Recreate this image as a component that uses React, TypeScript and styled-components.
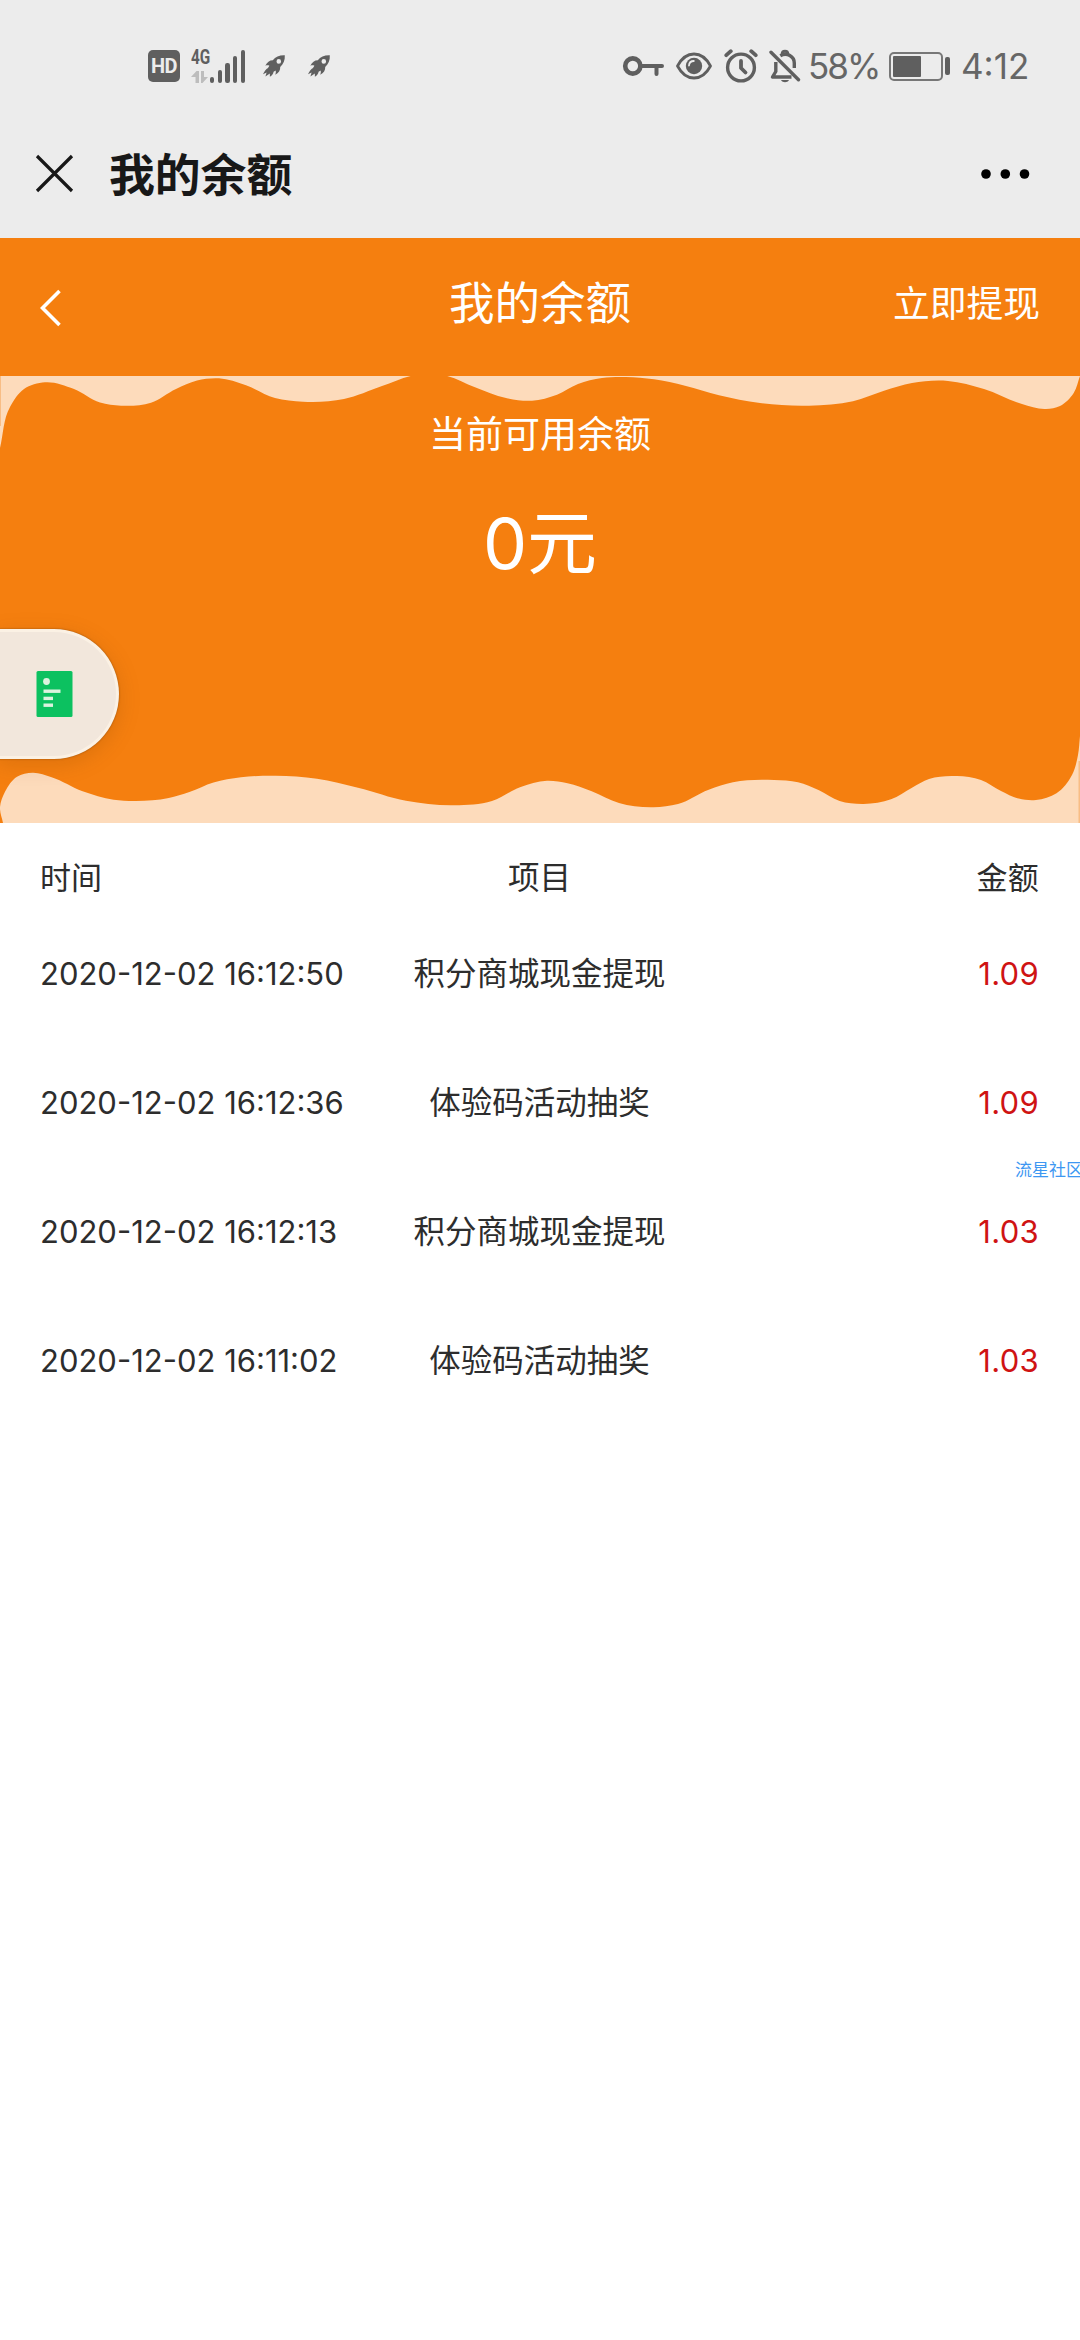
import React from "react";
import styled, { createGlobalStyle } from "styled-components";

const GlobalStyle = createGlobalStyle`
  html, body {
    margin: 0;
    padding: 0;
    background: #ffffff;
  }
  * {
    box-sizing: border-box;
  }
`;

const ORANGE = "#f57f0f";
const PEACH = "#fddbbb";
const STATUS_INK = "#5f5f5f";

const Screen = styled.div`
  position: relative;
  width: 1080px;
  height: 2340px;
  overflow: hidden;
  background: #ffffff;
  font-family: Inter, "Noto Sans CJK SC", sans-serif;
  color: #2d2d2d;
`;

/* ---------- status bar ---------- */

const StatusBar = styled.header`
  display: flex;
  justify-content: space-between;
  height: 109px;
  padding: 45px 52px 0 148px;
  background: #ececec;
  color: ${STATUS_INK};
`;

const StatusGroup = styled.div<{ $gap?: number; $end?: number }>`
  display: flex;
  align-items: center;
  height: 42px;
  gap: ${(p) => p.$gap ?? 0}px;
  margin-right: ${(p) => p.$end ?? 0}px;
`;

const HdBadge = styled.span`
  display: flex;
  align-items: center;
  justify-content: center;
  width: 32px;
  height: 32px;
  border-radius: 5px;
  background: ${STATUS_INK};
  color: #ececec;
  font: 700 20px/32px Roboto, sans-serif;
  letter-spacing: -0.6px;
`;

const Network = styled.div`
  display: flex;
  align-items: flex-end;
  width: 55px;
  height: 34px;
  margin: 0 16px 0 11px;
`;

const NetworkType = styled.div`
  display: flex;
  flex-direction: column;
  justify-content: space-between;
  width: 19px;
  height: 34px;
`;

const NetworkLabel = styled.span`
  font: 700 21px/16px Roboto, sans-serif;
  transform: scaleX(0.73);
  transform-origin: left;
`;

const SignalBars = styled.div`
  display: flex;
  align-items: flex-end;
  gap: 3.3px;
`;

const SignalBar = styled.i<{ $height: number }>`
  width: 4.4px;
  height: ${(p) => p.$height}px;
  border-radius: 2.2px;
  background: ${STATUS_INK};
`;

const StatusText = styled.span<{ $width: number; $spacing?: number }>`
  width: ${(p) => p.$width}px;
  font-size: 35px;
  line-height: 42px;
  letter-spacing: ${(p) => p.$spacing ?? 0}px;
  white-space: nowrap;
  color: #666666;
`;

const Battery = styled.div`
  display: flex;
  align-items: center;
  gap: 2px;
  margin: 0 11px 0 8px;
`;

const BatteryShell = styled.div`
  width: 54px;
  height: 29px;
  padding: 2px;
  border: 2px solid #777777;
  border-radius: 5px;
`;

const BatteryLevel = styled.div`
  width: 28px;
  height: 21px;
  border-radius: 1px;
  background: ${STATUS_INK};
`;

const BatteryTip = styled.div`
  width: 5px;
  height: 18px;
  border-radius: 2px;
  background: ${STATUS_INK};
`;

const Icon = styled.svg`
  display: block;
  flex: none;
`;

const Rocket = () => (
  <Icon width="24" height="24" viewBox="0 0 24 24">
    <path
      fill={STATUS_INK}
      fillRule="evenodd"
      d="M22.8 1.2C17.6 1 13.6 2.4 10.8 6.2C7.6 6.2 5 8.2 3.3 11.8C4.8 11.2 6.2 11.2 7.4 11.7L6 14C3.8 15.3 2.4 17.4 1 20.2L4.6 18.4L3.4 22.6L7.8 19.4L7.9 22.8C10.2 21.3 11.2 19.8 11.6 17.7L13.6 16.4C14 17.6 13.9 19 13.2 20.8C16.7 18.9 18.5 16.2 18.2 12.9C21.6 9.9 23.1 6.1 22.8 1.2ZM16.8 5.1A2.3 2.3 0 1 1 16.8 9.700A2.300 2.300 0 1 1 16.800 5.100Z"
    />
  </Icon>
);

const DataArrows = () => (
  <Icon width="18" height="12" viewBox="0 0 18 12">
    <path fill="#bdbdbd" d="M0 6L5.500 0H8V12H4.500V6ZM10 0H13V6H17L11.500 12H10Z" />
  </Icon>
);

const KeyIcon = () => (
  <Icon width="42" height="24" viewBox="0 0 42 24" fill="none" stroke={STATUS_INK}>
    <circle cx="10.800" cy="12" r="7.600" strokeWidth="4.600" />
    <path d="M18 12H40M34.500 12V20" strokeWidth="4" strokeLinecap="round" />
  </Icon>
);

const EyeIcon = () => (
  <Icon width="38" height="30" viewBox="0 0 38 30">
    <path
      d="M2.500 15C7 6.500 12.500 3 19 3S31 6.500 35.500 15C31 23.500 25.500 27 19 27S7 23.500 2.500 15Z"
      fill="none"
      stroke={STATUS_INK}
      strokeWidth="2.800"
      strokeLinejoin="round"
    />
    <circle cx="19" cy="15" r="8.200" fill={STATUS_INK} />
    <path d="M14 14.500C14.200 11.800 16.200 10 18.800 10" stroke="#ececec" strokeWidth="1.800" fill="none" strokeLinecap="round" />
  </Icon>
);

const AlarmIcon = () => (
  <Icon width="34" height="34" viewBox="0 0 34 34" fill="none" stroke={STATUS_INK} strokeLinecap="round">
    <circle cx="17" cy="18.500" r="13.400" strokeWidth="3.400" />
    <path d="M17 12V19L21.500 23.500" strokeWidth="3.800" strokeLinejoin="round" />
    <path d="M2.300 6.200L6.800 2.200M31.700 6.200L27.200 2.200" strokeWidth="3.800" />
  </Icon>
);

const BellOffIcon = () => (
  <Icon width="32" height="34" viewBox="0 0 32 34" fill="none" stroke={STATUS_INK} strokeLinecap="round" strokeLinejoin="round">
    <path d="M6.800 13V22.500L3.500 28H22.500" strokeWidth="3.400" strokeLinecap="butt" />
    <path d="M11.300 6.800C18 2.800 25.300 7.600 25.300 14V19" strokeWidth="3.400" strokeLinecap="butt" />
    <path d="M13.200 5C13.200 1.200 18.800 1.200 18.800 5" strokeWidth="3" />
    <path d="M2 3.300L29.500 30.800" strokeWidth="3.400" />
    <path d="M12 31H20C18.500 34 13.500 34 12 31Z" fill={STATUS_INK} stroke="none" />
  </Icon>
);

/* ---------- browser title bar ---------- */

const TitleBar = styled.div`
  display: flex;
  align-items: center;
  height: 129px;
  padding: 0 50px 0 35px;
  background: #ececec;
`;

const PageTitle = styled.h1`
  flex: 1;
  margin: 0 0 4px 35px;
  font-family: "Noto Sans CJK SC", sans-serif;
  font-size: 45.8px;
  font-weight: 700;
  line-height: 64px;
  color: #181818;
`;

/* ---------- page nav ---------- */

const NavBar = styled.nav`
  display: grid;
  grid-template-columns: 1fr auto 1fr;
  align-items: center;
  height: 138px;
  padding: 0 40px;
  background: ${ORANGE};
  color: #ffffff;
`;

const NavTitle = styled.h2`
  margin: 0 0 7px;
  font-size: 45.5px;
  font-weight: 400;
  line-height: 60px;
`;

const NavAction = styled.a`
  justify-self: end;
  margin-bottom: 7px;
  font-size: 36.75px;
  line-height: 50px;
`;

/* ---------- balance banner ---------- */

const Banner = styled.section`
  position: relative;
  display: flex;
  flex-direction: column;
  align-items: center;
  height: 447px;
  background: ${ORANGE};
  color: #ffffff;
`;

const WaveArt = styled.svg`
  position: absolute;
  inset: 0;
  width: 1080px;
  height: 447px;
`;

const BannerLabel = styled.div`
  position: relative;
  margin-top: 34px;
  font-size: 37px;
  line-height: 50px;
`;

const BannerAmount = styled.div`
  position: relative;
  margin-top: 39px;
  font-size: 70px;
  line-height: 90px;
`;

const FloatTab = styled.button`
  position: absolute;
  left: -3px;
  top: 253px;
  display: flex;
  align-items: center;
  width: 122px;
  height: 130px;
  padding: 0 0 0 36px;
  border: 3px solid #fbf1e4;
  border-left: 0;
  border-radius: 0 65px 65px 0;
  background: #f2e7dc;
  box-shadow: 0 0 2px rgba(110, 60, 10, 0.7), 0 5px 22px rgba(120, 60, 0, 0.2);
`;

type Point = [number, number];

// Chord-length Catmull-Rom spline expressed as cubic Bézier segments.
function curve(points: Point[]): string {
  const last = points.length - 1;
  const dist = (p: Point, q: Point) => Math.hypot(q[0] - p[0], q[1] - p[1]);
  const tangent = (i: number, axis: 0 | 1): number => {
    if (i === 0 || i === last) {
      const p = points[i === 0 ? 0 : last - 1];
      const q = points[i === 0 ? 1 : last];
      return (q[axis] - p[axis]) / dist(p, q);
    }
    const [a, b, c] = [points[i - 1], points[i], points[i + 1]];
    const before = dist(a, b);
    const after = dist(b, c);
    return (
      (c[axis] - b[axis]) / after -
      (c[axis] - a[axis]) / (before + after) +
      (b[axis] - a[axis]) / before
    );
  };
  let d = `${points[0][0]} ${points[0][1]}`;
  for (let i = 0; i < last; i++) {
    const b = points[i];
    const c = points[i + 1];
    const reach = dist(b, c) / 3;
    const n = [
      b[0] + tangent(i, 0) * reach,
      b[1] + tangent(i, 1) * reach,
      c[0] - tangent(i + 1, 0) * reach,
      c[1] - tangent(i + 1, 1) * reach,
      c[0],
      c[1],
    ];
    d += ` C${n.map((v) => v.toFixed(2)).join(" ")}`;
  }
  return d;
}

const topWave: Point[] = [
  [0, 72], [10, 31], [24, 13], [45, 6.3], [74, 13], [100, 26.5], [121, 29.7], [151, 26.7], [176, 13],
  [197, 4.5], [219, 2.3], [246, 9.3], [275, 22], [303, 25.7], [344, 23], [382, 10], [413, -0.5],
  [429, -2.5], [446, -0.3], [475, 11.3], [506, 22], [532, 24.7], [557, 18.7], [578, 8], [602, 2], [626, 1],
  [654, 3.3], [685, 9.7], [719, 19.3], [760, 27], [809, 29.7], [853, 25.3], [884, 14.7],
  [912, 7], [948, 5], [984, 13], [1022, 28], [1046, 33], [1060, 30], [1073.7, 17], [1080, 0],
];

const bottomWave: Point[] = [
  [3, 447], [0, 431], [5, 415.7], [17, 400.7], [32.7, 396.7], [51.6, 401.3], [82.6, 415.3],
  [113.6, 423.7], [134, 425], [168.7, 422], [189.4, 416], [213.5, 406.5], [241, 401.3],
  [275.5, 399.7], [317, 402.7], [358, 411.7], [406, 424.7], [454.5, 429.3], [492, 425],
  [520, 411.3], [547, 404.8], [567.5, 407.3], [591.7, 415.3], [619, 427], [653.6, 431.3],
  [678, 428], [708.7, 413.7], [733, 406.3], [774, 404], [798, 406.3], [819, 414.3], [839.6, 425],
  [863.7, 428], [891, 423.3], [912, 411.7], [929, 403], [956.7, 400], [981, 404], [1001, 415],
  [1018.7, 422.6], [1036, 424], [1056.5, 417.3], [1072, 399], [1078, 379], [1080, 360],
];

/* ---------- records ---------- */

const Row = styled.div<{ $head?: boolean }>`
  display: grid;
  grid-template-columns: 1fr auto 1fr;
  align-items: center;
  height: ${(p) => (p.$head ? 110 : 129)}px;
  padding: ${(p) => (p.$head ? 0 : "0 0 48px")};
  margin: 0 41px 0 40px;
  font-size: 31px;
  line-height: 44px;
`;

const Time = styled.span`
  white-space: nowrap;
`;

const Project = styled.span`
  font-size: 31.5px;
`;

const Amount = styled.span<{ $red?: boolean }>`
  justify-self: end;
  letter-spacing: 0.3px;
  color: ${(p) => (p.$red ? "#cf1313" : "inherit")};
`;

const Watermark = styled.div`
  position: absolute;
  left: 1015px;
  top: 1156px;
  font-family: "Noto Sans CJK SC", sans-serif;
  font-weight: 400;
  font-size: 17px;
  line-height: 26px;
  white-space: nowrap;
  color: #3d97f2;
`;

const records = [
  { time: "2020-12-02 16:12:50", project: "积分商城现金提现", amount: "1.09" },
  { time: "2020-12-02 16:12:36", project: "体验码活动抽奖", amount: "1.09" },
  { time: "2020-12-02 16:12:13", project: "积分商城现金提现", amount: "1.03" },
  { time: "2020-12-02 16:11:02", project: "体验码活动抽奖", amount: "1.03" },
];

export default function App() {
  return (
    <Screen>
      <GlobalStyle />
      <StatusBar>
        <StatusGroup>
          <HdBadge>HD</HdBadge>
          <Network>
            <NetworkType>
              <NetworkLabel>4G</NetworkLabel>
              <DataArrows />
            </NetworkType>
            <SignalBars>
              {[6.5, 13, 20.5, 27, 33.5].map((h) => (
                <SignalBar key={h} $height={h} />
              ))}
            </SignalBars>
          </Network>
          <StatusGroup $gap={21}>
            <Rocket />
            <Rocket />
          </StatusGroup>
        </StatusGroup>
        <StatusGroup>
          <StatusGroup $gap={11} $end={7}>
            <KeyIcon />
            <EyeIcon />
            <AlarmIcon />
            <BellOffIcon />
          </StatusGroup>
          <StatusText $width={73} $spacing={-2}>58%</StatusText>
          <Battery>
            <BatteryShell>
              <BatteryLevel />
            </BatteryShell>
            <BatteryTip />
          </Battery>
          <StatusText $width={67}>4:12</StatusText>
        </StatusGroup>
      </StatusBar>

      <TitleBar>
        <Icon width="39" height="39" viewBox="0 0 39 39">
          <path d="M2 2L37 37M37 2L2 37" stroke="#181818" strokeWidth="3.200" />
        </Icon>
        <PageTitle>我的余额</PageTitle>
        <Icon width="49" height="10" viewBox="0 0 49 10">
          <circle cx="5" cy="5" r="4.800" />
          <circle cx="24.300" cy="5" r="4.800" />
          <circle cx="43.500" cy="5" r="4.800" />
        </Icon>
      </TitleBar>

      <NavBar>
        <Icon width="22" height="40" viewBox="0 0 22 40">
          <path d="M19.500 4L2.500 21L19.500 38" fill="none" stroke="#ffffff" strokeWidth="3.600" />
        </Icon>
        <NavTitle>我的余额</NavTitle>
        <NavAction>立即提现</NavAction>
      </NavBar>

      <Banner>
        <WaveArt viewBox="0 0 1080 447">
          <path fill={PEACH} d={`M0 0L${curve(topWave)}Z`} />
          <path fill={PEACH} d={`M${curve(bottomWave)}V447Z`} />
          <path fill="#f8bd85" d="M1078.500 385H1080V447H1078.500ZM0 0H1V50H0Z" />
        </WaveArt>
        <BannerLabel>当前可用余额</BannerLabel>
        <BannerAmount>0元</BannerAmount>
        <FloatTab>
          <Icon width="43" height="46" viewBox="0 0 43 46">
            <rect x="3.500" y="0" width="36" height="46" rx="1.500" fill="#0cc160" />
            <g fill="#dcf3df">
              <circle cx="13.500" cy="10.500" r="3.400" />
              <rect x="10.500" y="18.500" width="17" height="3.400" />
              <rect x="10.500" y="25.700" width="9.500" height="3.400" />
              <rect x="10.500" y="32.500" width="9.500" height="3.400" />
            </g>
          </Icon>
        </FloatTab>
      </Banner>

      <Row $head>
        <Time>时间</Time>
        <Project>项目</Project>
        <Amount>金额</Amount>
      </Row>
      {records.map((r) => (
        <Row key={r.time}>
          <Time>{r.time}</Time>
          <Project>{r.project}</Project>
          <Amount $red>{r.amount}</Amount>
        </Row>
      ))}

      <Watermark>流星社区</Watermark>
    </Screen>
  );
}
